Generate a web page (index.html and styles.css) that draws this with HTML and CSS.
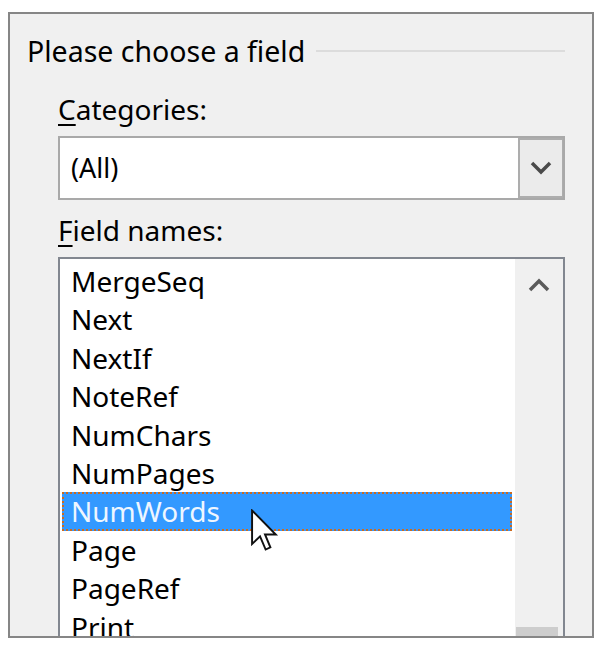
FILE: index.html
```html
<!DOCTYPE html>
<html lang="en">
<head>
    <meta charset="UTF-8">
    <meta name="viewport" content="width=device-width, initial-scale=1.0">
    <title>Field</title>
    <link rel="stylesheet" href="styles.css">
</head>
<body>

    <div class="frame">
        <div class="legend">
            <span class="legend-text">Please choose a field</span>
            <span class="legend-line"></span>
        </div>

        <div class="group">
            <div class="label"><u>C</u>ategories:</div>
            <div class="combo">
                <div class="combo-value">(All)</div>
                <div class="combo-button">
                    <svg width="22" height="14" viewBox="0 0 22 14">
                        <path d="M2 2 L11 11 L20 2" fill="none" stroke="#4a4a4a" stroke-width="3.5"/>
                    </svg>
                </div>
            </div>

            <div class="label"><u>F</u>ield names:</div>
            <div class="listbox">
                <ul class="items">
                    <li>MergeSeq</li>
                    <li>Next</li>
                    <li>NextIf</li>
                    <li>NoteRef</li>
                    <li>NumChars</li>
                    <li>NumPages</li>
                    <li class="selected">NumWords</li>
                    <li>Page</li>
                    <li>PageRef</li>
                    <li>Print</li>
                </ul>
                <div class="scrollbar">
                    <svg class="arrow-up" width="22" height="14" viewBox="0 0 22 14">
                        <path d="M2 12 L11 3 L20 12" fill="none" stroke="#5a5a5a" stroke-width="3.5"/>
                    </svg>
                    <div class="thumb"></div>
                </div>

                <svg class="cursor" width="28" height="44" viewBox="0 0 13 20">
                    <path d="M0.5 0.5 L0.5 16 L4.2 12.5 L6.8 18.6 L9 17.6 L6.5 11.6 L11.5 11.6 Z" fill="#ffffff" stroke="#111111" stroke-width="0.9" stroke-linejoin="miter"/>
                </svg>
            </div>
        </div>
    </div>

</body>
</html>
```

FILE: styles.css
```css
body {
    margin: 0;
    background: #ffffff;
    font-family: "Noto Sans", "Open Sans", sans-serif;
    color: #000000;
}
.frame {
    margin: 12px 0 0 8px;
    width: 582px;
    height: 622px;
    border: 2px solid #868686;
    background: #f0f0f0;
    overflow: hidden;
}
.legend {
    display: flex;
    align-items: center;
    padding: 19px 27px 0 17px;
    height: 35px;
}
.legend-text {
    font-size: 28.5px;
    line-height: 36px;
    white-space: nowrap;
}
.legend-line {
    flex: 1;
    height: 2px;
    margin-left: 11px;
    background: #dcdcdc;
}
.group {
    margin-left: 48px;
    width: 507px;
}
.label {
    font-size: 28px;
    line-height: 36px;
    margin-top: 23px;
    margin-bottom: 9px;
}
.label u {
    text-underline-offset: 4px;
    text-decoration-thickness: 2px;
}
.combo {
    display: flex;
    height: 60px;
    border: 2px solid #a9a9a9;
    background: #ffffff;
}
.combo-value {
    flex: 1;
    font-size: 27px;
    line-height: 60px;
    padding-left: 11px;
}
.combo-button {
    width: 45px;
    display: flex;
    align-items: center;
    justify-content: center;
    background: #ebebeb;
    border: 2px solid #adadad;
    border-width: 2px 1px 2px 2px;
    box-sizing: border-box;
}
.combo + .label {
    margin-top: 12px;
}
.listbox {
    position: relative;
    display: flex;
    height: 420px;
    border: 2px solid #828790;
    background: #ffffff;
}
.items {
    flex: 1;
    list-style: none;
    margin: 0;
    padding: 3px 3px 0 2px;
}
.items li {
    height: 38.4px;
    line-height: 38.4px;
    font-size: 28px;
    padding-left: 9px;
    box-sizing: border-box;
    white-space: nowrap;
}
.items li.selected {
    background: #3399ff;
    color: #eef6ff;
    outline: 2px dotted #cc6a1e;
    outline-offset: -2px;
}
.scrollbar {
    position: relative;
    width: 48px;
    background: #f0f0f0;
    display: flex;
    justify-content: center;
}
.arrow-up {
    margin-top: 19px;
}
.thumb {
    position: absolute;
    left: 1px;
    top: 368px;
    width: 42px;
    height: 20px;
    background: #cdcdcd;
}
.cursor {
    position: absolute;
    left: 191px;
    top: 250px;
}
```
